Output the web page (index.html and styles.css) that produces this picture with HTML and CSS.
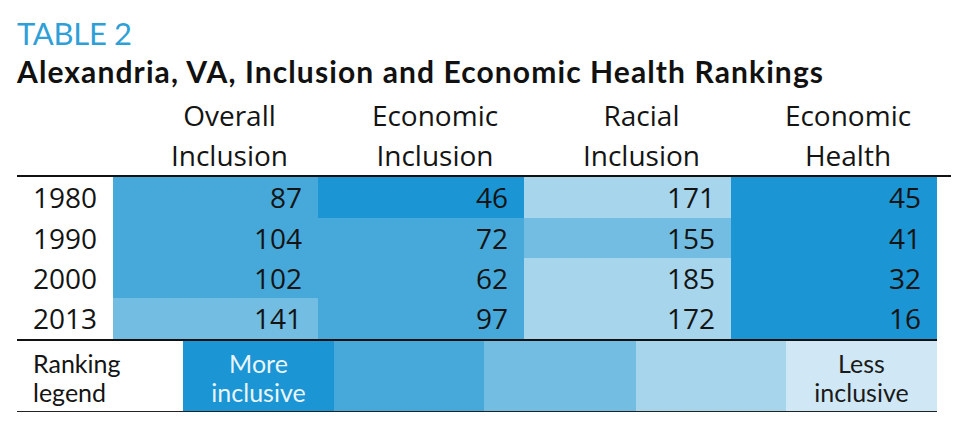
FILE: index.html
```html
<!DOCTYPE html>
<html lang="en">
<head>
<meta charset="utf-8">
<title>Table 2 – Alexandria, VA</title>
<link rel="stylesheet" href="styles.css">
</head>
<body>
<div class="page">
  <div class="caption">TABLE 2</div>
  <h1 class="title">Alexandria, VA, Inclusion and Economic Health Rankings</h1>
  <div class="rank-table">
    <div class="grid head">
      <div class="hcell"></div>
      <div class="hcell">Overall<br>Inclusion</div>
      <div class="hcell">Economic<br>Inclusion</div>
      <div class="hcell">Racial<br>Inclusion</div>
      <div class="hcell">Economic<br>Health</div>
    </div>
    <div class="body">
      <div class="grid row r-tall">
        <div class="year">1980</div>
        <div class="num s4">87</div>
        <div class="num s5">46</div>
        <div class="num s2">171</div>
        <div class="num s5">45</div>
      </div>
      <div class="grid row">
        <div class="year">1990</div>
        <div class="num s4">104</div>
        <div class="num s4">72</div>
        <div class="num s3">155</div>
        <div class="num s5">41</div>
      </div>
      <div class="grid row">
        <div class="year">2000</div>
        <div class="num s4">102</div>
        <div class="num s4">62</div>
        <div class="num s2">185</div>
        <div class="num s5">32</div>
      </div>
      <div class="grid row r-tall">
        <div class="year">2013</div>
        <div class="num s3">141</div>
        <div class="num s4">97</div>
        <div class="num s2">172</div>
        <div class="num s5">16</div>
      </div>
    </div>
    <div class="legend">
      <div class="legend-label">Ranking<br>legend</div>
      <div class="lcell s5 light">More<br>inclusive</div>
      <div class="lcell s4"></div>
      <div class="lcell s3"></div>
      <div class="lcell s2"></div>
      <div class="lcell s1">Less<br>inclusive</div>
    </div>
  </div>
</div>
</body>
</html>
```
FILE: styles.css
```css
html, body {
  margin: 0;
  padding: 0;
  background: #ffffff;
}

.page {
  padding: 18px 0 0 17px;
  color: #141414;
  font-family: "Open Sans", "Liberation Sans", sans-serif;
}

.caption {
  font-family: Lato, "Open Sans", sans-serif;
  font-size: 31px;
  line-height: 31px;
  height: 31px;
  color: #2f9fd7;
  letter-spacing: -0.3px;
}

.title {
  margin: 7px 0 0 0;
  font-family: Lato, "Open Sans", sans-serif;
  font-weight: 700;
  font-size: 30px;
  line-height: 30px;
  height: 30px;
  letter-spacing: 1.1px;
  color: #111111;
}

.rank-table {
  margin-top: 9px;
}

.grid {
  display: grid;
  grid-template-columns: 96px 205px 206px 207px 206px;
}

.head {
  width: 934px;
  border-bottom: 2px solid #111111;
}

.hcell {
  font-size: 28px;
  line-height: 40px;
  text-align: center;
  padding-left: 28px;
}

.body {
  width: 920px;
  border-bottom: 2px solid #111111;
}

.row {
  height: 40px;
}

.row.r-tall {
  height: 41px;
}

.year,
.num {
  font-size: 28px;
  line-height: 41px;
}

.year {
  padding-left: 16px;
}

.num {
  text-align: right;
  padding-right: 16px;
}

.s5 { background: #1b95d3; }
.s4 { background: #46a9da; }
.s3 { background: #72bde1; }
.s2 { background: #a6d5ec; }
.s1 { background: #d0e8f5; }

.legend {
  display: grid;
  grid-template-columns: 166px 151px 150px 152px 150px 151px;
  width: 920px;
  height: 70px;
  border-bottom: 1px solid #222222;
  font-family: Lato, "Open Sans", sans-serif;
  font-size: 25px;
  line-height: 29px;
}

.legend-label {
  padding: 8px 0 0 16px;
}

.lcell {
  padding-top: 8px;
  text-align: center;
  color: #1a1a1a;
}

.lcell.light {
  color: #e9f4fb;
}
```
